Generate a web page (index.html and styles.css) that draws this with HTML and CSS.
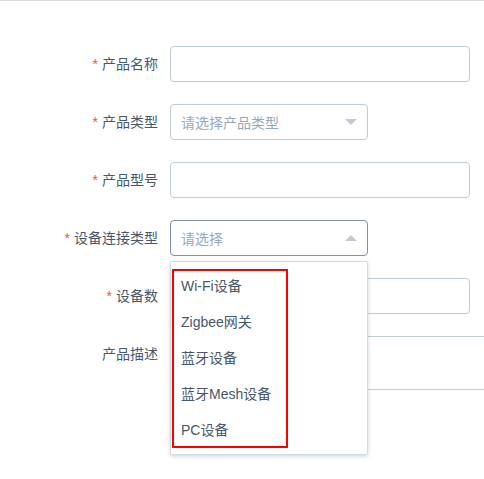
FILE: index.html
```html
<!DOCTYPE html>
<html lang="zh">
<head>
<meta charset="utf-8">
<link rel="stylesheet" href="styles.css">
</head>
<body>
<div class="page">
  <form class="form">
    <div class="row">
      <label class="label required">产品名称</label>
      <div class="control"><div class="input wide"></div></div>
    </div>
    <div class="row">
      <label class="label required">产品类型</label>
      <div class="control">
        <div class="input select"><span class="placeholder">请选择产品类型</span><span class="caret down"></span></div>
      </div>
    </div>
    <div class="row">
      <label class="label required">产品型号</label>
      <div class="control"><div class="input wide"></div></div>
    </div>
    <div class="row">
      <label class="label required">设备连接类型</label>
      <div class="control">
        <div class="input select focus"><span class="placeholder">请选择</span><span class="caret up"></span></div>
        <div class="dropdown">
          <ul class="options">
            <li>Wi-Fi设备</li>
            <li>Zigbee网关</li>
            <li>蓝牙设备</li>
            <li>蓝牙Mesh设备</li>
            <li>PC设备</li>
          </ul>
          <div class="highlight"></div>
        </div>
      </div>
    </div>
    <div class="row">
      <label class="label required">设备数</label>
      <div class="control"><div class="input wide"></div></div>
    </div>
    <div class="row">
      <label class="label">产品描述</label>
      <div class="control"><div class="textarea"></div></div>
    </div>
  </form>
</div>
</body>
</html>
```

FILE: styles.css
```css
html, body {
  margin: 0;
  padding: 0;
  background: #fff;
  overflow: hidden;
}
body {
  font-family: "Liberation Sans", "Noto Sans CJK SC", sans-serif;
  font-size: 14px;
  color: #48576a;
}
.page {
  width: 484px;
  height: 479px;
  border-top: 1px solid #dcdcdc;
  box-sizing: border-box;
  overflow: hidden;
}
.form {
  display: flex;
  flex-direction: column;
  gap: 22px;
  padding-top: 45px;
}
.row {
  display: grid;
  grid-template-columns: 170px 1fr;
  align-items: start;
}
.label {
  text-align: right;
  padding-right: 12px;
  line-height: 36px;
  height: 36px;
  color: #48576a;
}
.label.required::before {
  content: "*";
  color: #ff4949;
  margin-right: 4px;
}
.control {
  position: relative;
}
.input {
  height: 36px;
  box-sizing: border-box;
  border: 1px solid #bfcbd9;
  border-radius: 4px;
  background: #fff;
}
.input.wide {
  width: 300px;
}
.input.select {
  width: 198px;
  display: flex;
  align-items: center;
  justify-content: space-between;
  padding: 0 10px 0 10px;
}
.input.focus {
  border-color: #8391a5;
}
.placeholder {
  color: #97a8be;
}
.caret {
  width: 0;
  height: 0;
  border-left: 6px solid transparent;
  border-right: 6px solid transparent;
}
.caret.down {
  border-top: 6px solid #bfcbd9;
}
.caret.up {
  border-bottom: 6px solid #bfcbd9;
}
.textarea {
  width: 340px;
  height: 54px;
  box-sizing: border-box;
  border: 1px solid #bfcbd9;
  border-radius: 4px;
}
.dropdown {
  position: absolute;
  top: 41px;
  left: 0;
  width: 198px;
  box-sizing: border-box;
  border: 1px solid #d1dbe5;
  border-radius: 2px;
  background: #fff;
  box-shadow: 0 2px 4px rgba(0, 0, 0, 0.12), 0 0 6px rgba(0, 0, 0, 0.04);
  padding: 6px 0;
  z-index: 10;
}
.options {
  list-style: none;
  margin: 0;
  padding: 0;
}
.options li {
  height: 36px;
  line-height: 36px;
  padding: 0 10px;
  color: #48576a;
  white-space: nowrap;
}
.highlight {
  position: absolute;
  top: 7px;
  left: 1px;
  width: 116px;
  height: 179px;
  box-sizing: border-box;
  border: 2px solid #ff0000;
  pointer-events: none;
}
```
